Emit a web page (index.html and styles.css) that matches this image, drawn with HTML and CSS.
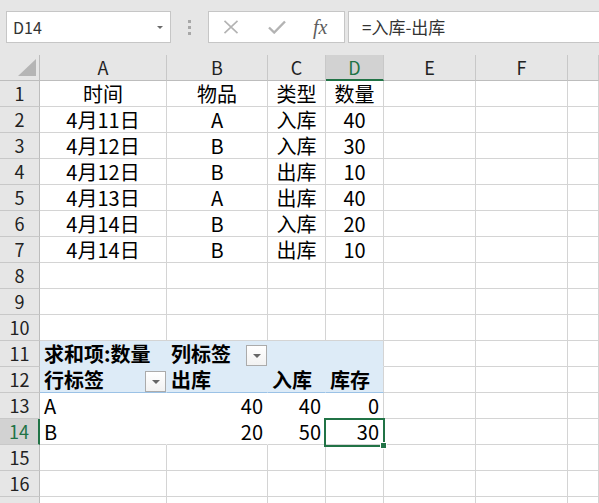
FILE: index.html
```html
<!DOCTYPE html>
<html lang="zh-CN">
<head>
<meta charset="utf-8">
<title>Sheet</title>
<link rel="stylesheet" href="styles.css">
</head>
<body>
<div class="topbar">
  <div class="namebox"><span class="nb-text">D14</span><span class="nb-arrow"></span></div>
  <div class="sep"><i></i><i></i><i></i></div>
  <div class="btnbox">
    <svg class="ic-x" width="16" height="14" viewBox="0 0 16 14"><path d="M1.5 0.8 L14.5 13.2 M14.5 0.8 L1.5 13.2" stroke="#b3b3b3" stroke-width="1.6" fill="none"/></svg>
    <svg class="ic-ok" width="18" height="14" viewBox="0 0 18 14"><path d="M1 7.5 L6.2 12.5 L17 1.5" stroke="#b3b3b3" stroke-width="2.4" fill="none"/></svg>
    <span class="fx">fx</span>
  </div>
  <div class="fbox">=入库-出库</div>
</div>
<div class="sheet">
  <div class="c hd corner"><svg width="20" height="18" viewBox="0 0 20 18"><path d="M19 0 L19 17 L1 17 Z" fill="#b5b5b5"/></svg></div>
  <div class="c hd">A</div><div class="c hd">B</div><div class="c hd">C</div><div class="c hd sel">D</div><div class="c hd">E</div><div class="c hd">F</div><div class="c hd"></div>

  <div class="c rh">1</div><div class="c ctr">时间</div><div class="c ctr">物品</div><div class="c ctr">类型</div><div class="c ctr">数量</div><div class="c"></div><div class="c"></div><div class="c"></div>
  <div class="c rh">2</div><div class="c ctr">4月11日</div><div class="c ctr">A</div><div class="c ctr">入库</div><div class="c ctr">40</div><div class="c"></div><div class="c"></div><div class="c"></div>
  <div class="c rh">3</div><div class="c ctr">4月12日</div><div class="c ctr">B</div><div class="c ctr">入库</div><div class="c ctr">30</div><div class="c"></div><div class="c"></div><div class="c"></div>
  <div class="c rh">4</div><div class="c ctr">4月12日</div><div class="c ctr">B</div><div class="c ctr">出库</div><div class="c ctr">10</div><div class="c"></div><div class="c"></div><div class="c"></div>
  <div class="c rh">5</div><div class="c ctr">4月13日</div><div class="c ctr">A</div><div class="c ctr">出库</div><div class="c ctr">40</div><div class="c"></div><div class="c"></div><div class="c"></div>
  <div class="c rh">6</div><div class="c ctr">4月14日</div><div class="c ctr">B</div><div class="c ctr">入库</div><div class="c ctr">20</div><div class="c"></div><div class="c"></div><div class="c"></div>
  <div class="c rh">7</div><div class="c ctr">4月14日</div><div class="c ctr">B</div><div class="c ctr">出库</div><div class="c ctr">10</div><div class="c"></div><div class="c"></div><div class="c"></div>
  <div class="c rh">8</div><div class="c"></div><div class="c"></div><div class="c"></div><div class="c"></div><div class="c"></div><div class="c"></div><div class="c"></div>
  <div class="c rh">9</div><div class="c"></div><div class="c"></div><div class="c"></div><div class="c"></div><div class="c"></div><div class="c"></div><div class="c"></div>
  <div class="c rh">10</div><div class="c"></div><div class="c"></div><div class="c"></div><div class="c"></div><div class="c"></div><div class="c"></div><div class="c"></div>

  <div class="c rh">11</div>
  <div class="c pv pv-top nr b">求和项:数量</div>
  <div class="c pv pv-top nr b flexcell"><span>列标签</span><span class="dd"></span></div>
  <div class="c pv pv-top nr"></div>
  <div class="c pv pv-top"></div>
  <div class="c"></div><div class="c"></div><div class="c"></div>

  <div class="c rh">12</div>
  <div class="c pv pv-bot nr b flexcell"><span>行标签</span><span class="dd"></span></div>
  <div class="c pv pv-bot nr b">出库</div>
  <div class="c pv pv-bot nr b">入库</div>
  <div class="c pv pv-bot b">库存</div>
  <div class="c"></div><div class="c"></div><div class="c"></div>

  <div class="c rh">13</div>
  <div class="c nr nb">A</div><div class="c nr nb rt">40</div><div class="c nr nb rt">40</div><div class="c nb rt">0</div>
  <div class="c"></div><div class="c"></div><div class="c"></div>

  <div class="c rh rsel">14</div>
  <div class="c nr">B</div><div class="c nr rt">20</div><div class="c nr rt">50</div><div class="c rt">30</div>
  <div class="c"></div><div class="c"></div><div class="c"></div>

  <div class="c rh">15</div><div class="c"></div><div class="c"></div><div class="c"></div><div class="c"></div><div class="c"></div><div class="c"></div><div class="c"></div>
  <div class="c rh">16</div><div class="c"></div><div class="c"></div><div class="c"></div><div class="c"></div><div class="c"></div><div class="c"></div><div class="c"></div>
  <div class="c rh">17</div><div class="c"></div><div class="c"></div><div class="c"></div><div class="c"></div><div class="c"></div><div class="c"></div><div class="c"></div>

  <div class="selbox"></div>
  <div class="handle"></div>
</div>
</body>
</html>
```
FILE: styles.css
```css
html, body {
  margin: 0;
  padding: 0;
}
body {
  width: 599px;
  height: 503px;
  overflow: hidden;
  background: #ffffff;
  font-family: "Noto Sans CJK SC", "Noto Sans", sans-serif;
  color: #000;
}
.topbar {
  height: 55px;
  box-sizing: border-box;
  background: #e6e6e6;
  display: flex;
  align-items: flex-start;
  padding: 11px 0 0 6px;
}
.namebox {
  width: 165px;
  height: 32px;
  box-sizing: border-box;
  background: #fff;
  border: 1px solid #c6c6c6;
  display: flex;
  align-items: center;
  padding: 0 7px 0 6px;
  font-size: 16px;
  line-height: 20px;
  color: #333;
}
.nb-text { flex: 1; }
.nb-arrow {
  width: 0;
  height: 0;
  border-left: 3px solid transparent;
  border-right: 3px solid transparent;
  border-top: 3px solid #6a6a6a;
  margin-top: 1px;
}
.sep {
  width: 37px;
  height: 32px;
  display: flex;
  flex-direction: column;
  align-items: center;
  justify-content: center;
  gap: 3px;
}
.sep i {
  display: block;
  width: 3px;
  height: 3px;
  background: #a8a8a8;
}
.btnbox {
  width: 137px;
  height: 32px;
  box-sizing: border-box;
  background: #fff;
  border: 1px solid #c6c6c6;
  display: flex;
  align-items: center;
  padding-left: 14px;
}
.ic-x { margin-right: 29px; }
.ic-ok { margin-right: 27px; }
.fx {
  font-family: "Liberation Serif", serif;
  font-style: italic;
  font-size: 20px;
  line-height: 20px;
  color: #5e5e5e;
}
.fbox {
  flex: 1;
  margin-left: 3px;
  height: 32px;
  box-sizing: border-box;
  background: #fff;
  border: 1px solid #c6c6c6;
  border-right: none;
  padding-left: 13px;
  font-size: 17px;
  line-height: 29px;
  color: #333;
}
.sheet {
  position: relative;
  display: grid;
  grid-template-columns: 40px 127px 101px 58px 58px 92px 92px 31px;
  grid-auto-rows: 26px;
}
.c {
  box-sizing: border-box;
  border-right: 1px solid #d4d4d4;
  border-bottom: 1px solid #d4d4d4;
  font-size: 20px;
  line-height: 25px;
  padding: 0 4px;
  white-space: nowrap;
}
.ctr { text-align: center; }
.rt { text-align: right; }
.hd {
  background: #e6e6e6;
  border-right-color: #c8c8c8;
  border-bottom-color: #bdbdbd;
  text-align: center;
  font-size: 18px;
  color: #222;
}
.corner {
  border-right-color: #bdbdbd;
  display: flex;
  align-items: flex-end;
  justify-content: flex-end;
  padding: 0 2px 3px 0;
}
.corner svg { display: block; }
.hd.sel {
  background: #d2d2d2;
  border-bottom: 2px solid #217346;
  line-height: 24px;
  color: #217346;
}
.rh {
  background: #e6e6e6;
  border-right-color: #bdbdbd;
  border-bottom-color: #c8c8c8;
  text-align: center;
  font-size: 18px;
  color: #222;
  padding: 0;
}
.rh.rsel {
  background: #d2d2d2;
  color: #217346;
  border-right: 2px solid #217346;
}
.pv { background: #ddebf7; }
.pv-top { border-bottom-color: #ddebf7; }
.pv-bot { border-bottom-color: #9bc2e6; }
.nr { border-right-color: transparent; }
.pv.nr { border-right-color: #ddebf7; }
.nb { border-bottom-color: transparent; }
.b { font-weight: 700; }
.flexcell {
  display: flex;
  align-items: center;
  padding-right: 0;
}
.dd {
  margin-left: auto;
  align-self: flex-end;
  width: 21px;
  height: 21px;
  box-sizing: border-box;
  border: 1px solid #ababab;
  background: linear-gradient(#ffffff, #f2f2f2);
  display: flex;
  align-items: center;
  justify-content: center;
}
.dd::after {
  content: "";
  width: 0;
  height: 0;
  border-left: 4px solid transparent;
  border-right: 4px solid transparent;
  border-top: 4px solid #666;
}
.selbox {
  position: absolute;
  left: 324px;
  top: 363px;
  width: 61px;
  height: 29px;
  box-sizing: border-box;
  border: 2px solid #217346;
}
.handle {
  position: absolute;
  left: 380px;
  top: 387px;
  width: 7px;
  height: 7px;
  box-sizing: border-box;
  background: #217346;
  border: 1px solid #fff;
}
```
